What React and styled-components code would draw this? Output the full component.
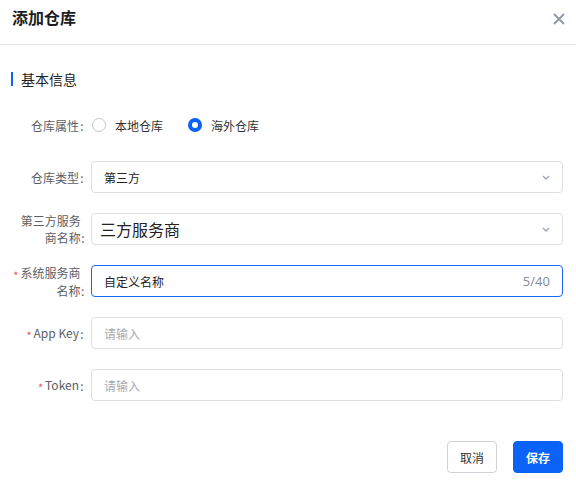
import React from 'react'
import styled, { createGlobalStyle } from 'styled-components'

const GlobalStyle = createGlobalStyle`
	html, body {
		margin: 0;
		padding: 0;
		background: #fff;
	}
	body {
		font-family: 'Noto Sans', 'Noto Sans CJK SC', sans-serif;
		color: #333;
	}
`

const Dialog = styled.div`
	width: 576px;
	height: 486px;
	display: flex;
	flex-direction: column;
	box-sizing: border-box;
`

const Header = styled.div`
	height: 44px;
	border-bottom: 1px solid #e6e6e6;
	display: flex;
	justify-content: space-between;
	align-items: flex-start;
	padding: 0 11px 0 12px;
`

const Title = styled.div`
	font-size: 16px;
	font-weight: 700;
	line-height: 34px;
	color: #1d1d1f;
	font-family: 'Noto Sans CJK SC', sans-serif;
`

const CloseButton = styled.button`
	border: none;
	background: none;
	padding: 0;
	margin-top: 13px;
	width: 12px;
	height: 12px;
	cursor: pointer;
	display: flex;
`

const Body = styled.div`
	padding: 24px 13px 0 11px;
	display: flex;
	flex-direction: column;
	gap: 20px;
`

const SectionTitle = styled.div`
	height: 20px;
	display: flex;
	align-items: center;
	font-size: 14px;
	color: #222;
	font-family: 'Noto Sans CJK SC', sans-serif;

	&::before {
		content: '';
		width: 2px;
		height: 14px;
		background: #0a63f6;
		margin-right: 8px;
	}
`

const Row = styled.div`
	display: flex;
	align-items: center;
	height: 32px;
`

const Label = styled.div`
	width: 74px;
	margin-right: 6px;
	display: flex;
	justify-content: flex-end;
	align-items: center;
	font-size: 12px;
	line-height: 17px;
	color: #5c6066;
	font-family: 'Noto Sans CJK SC', sans-serif;
`

const LabelText = styled.div`
	max-width: 70px;
	text-align: right;
`

const Colon = styled.span`
	align-self: flex-end;
	width: 6px;
	text-align: center;
`

const Required = styled.span`
	color: #e8505b;
	font-size: 11px;
	position: relative;
	top: 2px;
	margin-right: 2px;
`

const RadioGroup = styled.div`
	display: flex;
	align-items: center;
	gap: 25px;
	padding-left: 1px;
`

const RadioOption = styled.label`
	display: flex;
	align-items: center;
	gap: 9px;
	font-size: 12px;
	color: #333;
	font-family: 'Noto Sans CJK SC', sans-serif;
	cursor: pointer;
`

const RadioDot = styled.span`
	width: 14px;
	height: 14px;
	border-radius: 50%;
	box-sizing: border-box;
	border: ${(p) => (p.checked ? '4.5px solid #0a63f6' : '1px solid #c4c7cc')};
	background: #fff;
`

const Field = styled.div`
	flex: 1;
	height: 32px;
	box-sizing: border-box;
	border: 1px solid ${(p) => (p.focused ? '#1a66f5' : '#dcdfe4')};
	border-radius: 4px;
	display: flex;
	align-items: center;
	padding: 0 12px 0 ${(p) => (p.large ? 8 : 12)}px;
	background: #fff;
`

const FieldText = styled.span`
	flex: 1;
	font-size: ${(p) => (p.large ? 16 : 12)}px;
	color: ${(p) => (p.placeholder ? '#a8abb2' : '#222')};
	font-family: 'Noto Sans CJK SC', sans-serif;
`

const Counter = styled.span`
	font-size: 13px;
	color: #86909c;
`

const Footer = styled.div`
	margin-top: auto;
	padding: 0 13px 13px 0;
	display: flex;
	justify-content: flex-end;
	gap: 16px;
`

const Button = styled.button`
	width: 50px;
	height: 32px;
	border-radius: 4px;
	font-size: 12px;
	font-family: 'Noto Sans CJK SC', sans-serif;
	cursor: pointer;
	border: 1px solid ${(p) => (p.primary ? '#0a63f6' : '#cfd2d8')};
	background: ${(p) => (p.primary ? '#0a63f6' : '#fff')};
	color: ${(p) => (p.primary ? '#fff' : '#333')};
	font-weight: ${(p) => (p.primary ? 700 : 400)};
`

const Chevron = () => (
	<svg width='8' height='5' viewBox='0 0 8 5'>
		<path d='M1 1l3 3 3-3' fill='none' stroke='#9aa3b1' strokeWidth='1.3' />
	</svg>
)

const FormLabel = ({ required, children }) => (
	<Label>
		<LabelText>
			{required && <Required>*</Required>}
			{children}
		</LabelText>
		<Colon>:</Colon>
	</Label>
)

export default function App() {
	return (
		<Dialog>
			<GlobalStyle />
			<Header>
				<Title>添加仓库</Title>
				<CloseButton>
					<svg width='12' height='12' viewBox='0 0 12 12'>
						<path d='M1 1l10 10M11 1L1 11' stroke='#8f9aaa' strokeWidth='2' />
					</svg>
				</CloseButton>
			</Header>
			<Body>
				<SectionTitle>基本信息</SectionTitle>
				<Row>
					<FormLabel>仓库属性</FormLabel>
					<RadioGroup>
						<RadioOption>
							<RadioDot />
							本地仓库
						</RadioOption>
						<RadioOption>
							<RadioDot checked />
							海外仓库
						</RadioOption>
					</RadioGroup>
				</Row>
				<Row>
					<FormLabel>仓库类型</FormLabel>
					<Field>
						<FieldText>第三方</FieldText>
						<Chevron />
					</Field>
				</Row>
				<Row>
					<FormLabel>第三方服务商名称</FormLabel>
					<Field large>
						<FieldText large>三方服务商</FieldText>
						<Chevron />
					</Field>
				</Row>
				<Row>
					<FormLabel required>系统服务商名称</FormLabel>
					<Field focused>
						<FieldText>自定义名称</FieldText>
						<Counter>5/40</Counter>
					</Field>
				</Row>
				<Row>
					<FormLabel required>App Key</FormLabel>
					<Field>
						<FieldText placeholder>请输入</FieldText>
					</Field>
				</Row>
				<Row>
					<FormLabel required>Token</FormLabel>
					<Field>
						<FieldText placeholder>请输入</FieldText>
					</Field>
				</Row>
			</Body>
			<Footer>
				<Button>取消</Button>
				<Button primary>保存</Button>
			</Footer>
		</Dialog>
	)
}
